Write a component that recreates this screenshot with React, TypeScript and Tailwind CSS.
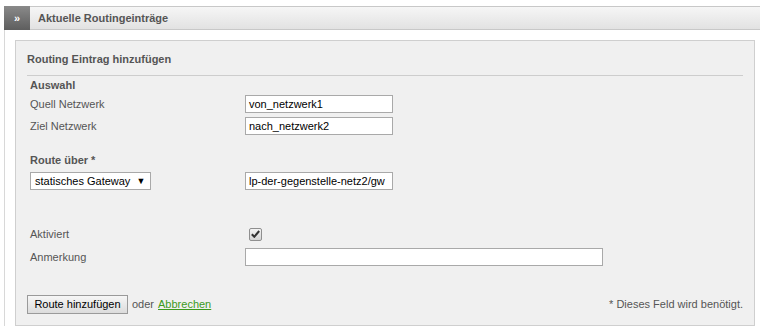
const font = { fontFamily: '"Liberation Sans", Arial, sans-serif' };

const Label = ({ children }: { children: React.ReactNode }) => (
  <div className="w-[215px] shrink-0 text-[11px] leading-[16px] text-[#555]">{children}</div>
);

const TextInput = ({ value, w }: { value: string; w: string }) => (
  <div
    className={`${w} h-[18px] whitespace-nowrap border border-[#a9a9a9] bg-white px-[3px] text-[11px] leading-[16px] text-black`}
  >
    {value}
  </div>
);

const App = () => {
  return (
    <div className="h-[330px] w-[760px] overflow-hidden bg-white pl-[4px] pt-[6px]" style={font}>
      {/* header bar */}
      <div className="flex h-[24px] border-y border-[#c8c8c8] bg-gradient-to-b from-[#f6f6f6] to-[#e2e2e2]">
        <div className="-my-px flex w-[26px] items-center justify-center bg-gradient-to-b from-[#8a8a8a] to-[#5e5e5e] text-[11px] font-bold text-white">
          »
        </div>
        <div className="flex items-center pl-[8px] text-[11px] font-bold text-[#555]">
          Aktuelle Routingeinträge
        </div>
      </div>

      <div className="border-l border-[#d8d8d8] pl-[10px] pt-[10px]">
        <div className="w-[740px] border border-[#cfcfcf] bg-[#f0f0f0] px-[11px] pb-[11px] pt-[10px]">
          <div className="text-[11px] font-bold leading-[16px] text-[#555]">Routing Eintrag hinzufügen</div>
          <div className="mt-[8px] border-b border-[#cdcdcd]" />

          <div className="pl-[3px]">
            <div className="mt-px text-[11px] font-bold leading-[16px] text-[#555]">Auswahl</div>

            <div className="mt-[2px] flex items-center">
              <Label>Quell Netzwerk</Label>
              <TextInput value="von_netzwerk1" w="w-[148px]" />
            </div>
            <div className="mt-[4px] flex items-center">
              <Label>Ziel Netzwerk</Label>
              <TextInput value="nach_netzwerk2" w="w-[148px]" />
            </div>

            <div className="mt-[17px] text-[11px] font-bold leading-[16px] text-[#555]">Route über *</div>

            <div className="mt-[4px] flex items-center">
              <div className="w-[215px] shrink-0">
                <div className="flex h-[18px] w-[121px] items-center whitespace-nowrap border border-[#a9a9a9] bg-white pl-[4px] text-[11px] leading-[16px] text-black">
                  statisches Gateway
                  <span className="ml-[6px] text-[9px]">▼</span>
                </div>
              </div>
              <TextInput value="lp-der-gegenstelle-netz2/gw" w="w-[148px]" />
            </div>

            <div className="mt-[35px] flex h-[18px] items-center">
              <Label>Aktiviert</Label>
              <div className="ml-[4px] flex h-[13px] w-[13px] items-center justify-center rounded-[2px] border border-[#8f8f8f] bg-gradient-to-b from-[#f4f4f4] to-[#d4d4d4]">
                <svg width="9" height="8" viewBox="0 0 9 8">
                  <path d="M0.8 4.2 L3.3 6.8 L8.2 1" fill="none" stroke="#333" strokeWidth="2" />
                </svg>
              </div>
            </div>

            <div className="mt-[5px] flex items-center">
              <Label>Anmerkung</Label>
              <TextInput value="" w="w-[358px]" />
            </div>
          </div>

          <div className="mt-[29px] flex items-center justify-between">
            <div className="flex items-center text-[11px]">
              <div className="flex h-[19px] w-[101px] items-center justify-center border border-[#9a9a9a] bg-gradient-to-b from-[#f6f6f6] to-[#dcdcdc] text-black">
                Route hinzufügen
              </div>
              <span className="ml-[4px] text-[#555]">oder</span>
              <a className="ml-[4px] text-[#3c9a1c] underline">Abbrechen</a>
            </div>
            <div className="text-[11px] text-[#555]">* Dieses Feld wird benötigt.</div>
          </div>
        </div>
      </div>
    </div>
  );
};

export default App;
